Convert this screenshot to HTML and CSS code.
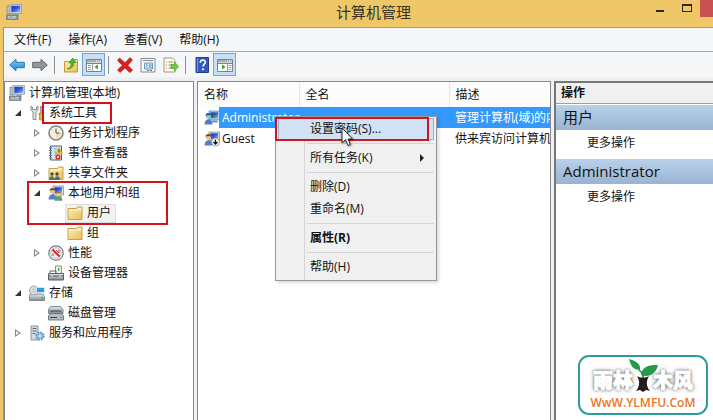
FILE: index.html
```html
<!DOCTYPE html>
<html lang="zh-CN">
<head>
<meta charset="utf-8">
<title>计算机管理</title>
<meta name="viewport" content="width=device-width,initial-scale=1">
<link rel="stylesheet" href="styles.css">
</head>
<body>

<!-- shared icons -->
<svg class="sprite" aria-hidden="true">
  <defs>
    <linearGradient id="screen" x1="0" y1="0" x2="1" y2="1"><stop offset="0" stop-color="#1c2fb8"/><stop offset=".5" stop-color="#3558e0"/><stop offset="1" stop-color="#a9c8fb"/></linearGradient>
    <linearGradient id="yellow" x1="0" y1="0" x2="1" y2="1"><stop offset="0" stop-color="#fff0b8"/><stop offset="1" stop-color="#e9bd55"/></linearGradient>
    <linearGradient id="sky" x1="0" y1="0" x2="0" y2="1"><stop offset="0" stop-color="#7fd0f8"/><stop offset="1" stop-color="#1b86cf"/></linearGradient>
    <linearGradient id="metal" x1="0" y1="0" x2="0" y2="1"><stop offset="0" stop-color="#e8ecee"/><stop offset="1" stop-color="#7d8990"/></linearGradient>
  </defs>
  <symbol id="i-computer" viewBox="0 0 16 16">
    <path d="M1 2h4v8H1z" fill="#b9c2c8" stroke="#6f7a82" stroke-width=".6"/>
    <path d="M4 .5h11.5v9H4z" fill="#d5dbe0" stroke="#7c8790" stroke-width=".6"/>
    <path d="M5.300 1.800h9v6.400h-9z" fill="url(#screen)"/>
    <path d="M8 9.500h4l1 2H7z" fill="#a5adb3"/>
    <path d="M.5 11h11.500v4.500H.5z" fill="#8b979f" stroke="#58646c" stroke-width=".6"/>
    <path d="M2 12.500h2.500m1.500 0h4M2 14h8" stroke="#c4cdd2"/>
  </symbol>
  <symbol id="i-folder" viewBox="0 0 16 16">
    <path d="M1 3.500 9.500 3.500 10.500 2h4.500v12.500H1z" fill="url(#yellow)" stroke="#c9a048"/>
    <path d="M11 3.500h3M2 5h12.500" stroke="#fff8dc"/>
  </symbol>
  <symbol id="i-pane" viewBox="0 0 16 14">
    <path d="M.5 1.500h15v12H.5z" fill="#fff" stroke="#7b8187"/>
    <path d="M1 2h14v2.500H1z" fill="#a8adb2"/>
    <path d="M10 3h1m1 0h1m1 0h1" stroke="#fff"/>
    <path d="M1 5.500h14" stroke="#7b8187"/>
    <path d="M6.500 6v7" stroke="#9b9fa3"/>
    <path d="M2 7.500h3M2 9.500h3M2 11.500h3" stroke="#9b9fa3"/>
  </symbol>
  <symbol id="i-user" viewBox="0 0 16 16">
    <path d="M5 1h10.500v9H5z" fill="#d5dbe0" stroke="#7c8790" stroke-width=".7"/>
    <path d="M6.500 2.300h7.500v6h-7.500z" fill="url(#screen)"/>
    <path d="M8 10.500h5l1 2H8z" fill="#8e989f"/>
    <circle cx="4.500" cy="6" r="2.700" fill="#eabf8d"/>
    <path d="M1.600 6C1 2 8 2 7.400 6 6 4.500 3.500 4.500 1.600 6z" fill="#6d4c28"/>
    <path d="M.5 14.500c0-7 8-7 8 0z" fill="#4f82c4"/>
  </symbol>
</svg>

<header class="titlebar">
  <svg class="icon"><use href="#i-computer"/></svg>
  <h1>计算机管理</h1>
  <div class="winctl">
    <button class="min" aria-label="最小化"></button>
    <button class="max" aria-label="最大化"></button>
    <button class="close" aria-label="关闭"></button>
  </div>
</header>

<div class="window">
  <nav class="menubar">
    <button>文件(F)</button>
    <button>操作(A)</button>
    <button>查看(V)</button>
    <button>帮助(H)</button>
  </nav>

  <div class="toolbar">
    <button aria-label="后退"><svg class="icon" viewBox="0 0 16 16"><path d="M.7 8 7 2.300v3h8.300v5.400H7v3z" fill="url(#sky)" stroke="#2577b5"/></svg></button>
    <button aria-label="前进"><svg class="icon" viewBox="0 0 16 16"><path d="M15.300 8 9 2.300v3H.7v5.400H9v3z" fill="#929699" stroke="#66696c"/></svg></button>
    <i class="sep"></i>
    <button aria-label="向上"><svg class="icon" viewBox="0 0 16 16"><path d="M1.500 4.500h7l1-2h5v12.500h-13z" fill="url(#yellow)" stroke="#c39a3d"/><path d="M4 12c3.500-1 4.500-3.500 4.200-6H6L9.500 1 13 5.500h-2.200C11 9 9 12 4 12z" fill="#48b82c" stroke="#2a8a18" stroke-width=".6"/></svg></button>
    <button class="on" aria-label="显示控制台树"><svg class="icon" viewBox="0 0 16 14"><use href="#i-pane"/><path d="M12 6.500v5L8.500 9z" fill="#35a82c"/></svg></button>
    <i class="sep"></i>
    <button aria-label="删除"><svg class="icon" viewBox="0 0 16 16"><path d="M2.500 1 8 5.800 13 .5l2.500 2.500-4.700 5.300L15.500 13 13 15.700l-5-4.700-5 4.500L.5 13l4.800-4.700L.5 3.500z" fill="#dc2020" stroke="#a91414" stroke-width=".6"/></svg></button>
    <button aria-label="属性"><svg class="icon" viewBox="0 0 16 16"><path d="M1 1.500h14v13.500H1z" fill="#f5f7f9" stroke="#858c92"/><path d="M3 3.500h10" stroke="#858c92"/><path d="M4.500 6h8v6h-8z" fill="#dceaf5" stroke="#6998bb"/><path d="M6 8h1.500M9 8h2.500M6 10h1.500M9 10h2.500" stroke="#3b81b4"/><path d="M7 13.500h2m1 0h2" stroke="#777"/></svg></button>
    <button aria-label="导出列表"><svg class="icon" viewBox="0 0 16 16"><path d="M1 1h8.500L12 3.500V15H1z" fill="#fffbe6" stroke="#a2967a"/><path d="M3 5h1m1.500 0h5M3 8h1m1.500 0h4M3 11h1m1.500 0h4" stroke="#8c8c83"/><path d="M8 7.500h3.500V5l4 4.500-4 4.500v-2.500H8z" fill="#69cc3b" stroke="#3d9a21" stroke-width=".6"/></svg></button>
    <i class="sep"></i>
    <button aria-label="帮助"><svg class="icon" viewBox="0 0 16 16"><path d="M2 .5h12.500v15H2z" fill="#3458bb" stroke="#203b8b"/><path d="M3.500 1v14" stroke="#7897e4"/><path d="M6.300 5.800c0-3.800 5-3.500 5-.6 0 2-2.300 2-2.300 4.300" fill="none" stroke="#fff" stroke-width="1.600"/><circle cx="9" cy="12.300" r="1.100" fill="#fff"/></svg></button>
    <button class="on" aria-label="显示操作窗格"><svg class="icon" viewBox="0 0 16 14"><use href="#i-pane"/><path d="M1 6h9v7H1z" fill="#fff"/><path d="M10.500 6v7" stroke="#9b9fa3"/><path d="M11.500 7.500h3m-3 2h3m-3 2h3" stroke="#9b9fa3"/><path d="M5 6.500v5L8.500 9z" fill="#35a82c"/></svg></button>
  </div>

  <main class="panes">
    <!-- console tree -->
    <section class="pane tree">
      <div class="node root"><svg class="icon"><use href="#i-computer"/></svg><span>计算机管理(本地)</span></div>
      <ul>
        <li>
          <div class="node"><i class="tw open"></i><svg class="icon" viewBox="0 0 16 16"><path d="M2 1v4l2 2v7.500h3V7l2-2V1L7.500 2v2.500h-4V2z" fill="#dce0e2" stroke="#777e83" stroke-width=".8"/><path d="M12 1v7" stroke="#7e868b" stroke-width="1.500"/><path d="M10 8h4v2h-.5v5h-3v-5H10z" fill="#f1b51e" stroke="#b87e08" stroke-width=".7"/></svg><span class="mark">系统工具</span></div>
          <ul>
            <li><div class="node"><i class="tw"></i><svg class="icon" viewBox="0 0 16 16"><circle cx="8" cy="8" r="7" fill="#f4efdb" stroke="#83898f" stroke-width="1.600"/><path d="M8 8h5A5 5 0 0 1 8 13z" fill="#f2dca0"/><path d="M8 3.500V8h3.500" fill="none" stroke="#4d545a"/></svg><span>任务计划程序</span></div></li>
            <li><div class="node"><i class="tw"></i><svg class="icon" viewBox="0 0 16 16"><path d="M2.500 1h11v14h-11z" fill="#dce7f3" stroke="#46638d"/><path d="M1 3h3M1 5.500h3M1 8h3M1 10.500h3M1 13h3" stroke="#5c6f88"/><path d="M6 4h3M6 7h2M6 10h2" stroke="#7596bc"/><path d="M11 2.500 14.500 9h-7z" fill="#ffd42c" stroke="#bd8e00" stroke-width=".6"/><path d="M11 4.500v3" stroke="#222"/><circle cx="10" cy="12" r="2.600" fill="#d8292d"/><path d="m9 11 2 2m0-2-2 2" stroke="#fff" stroke-width=".8"/></svg><span>事件查看器</span></div></li>
            <li><div class="node"><i class="tw"></i><svg class="icon" viewBox="0 0 16 16"><use href="#i-folder"/><circle cx="4" cy="9" r="1.700" fill="#55452a"/><circle cx="9" cy="9" r="1.700" fill="#55452a"/><path d="M1 15c0-5 5.500-5 5.500 0z" fill="#3a7d6b"/><path d="M6.500 15c0-5 5.500-5 5.500 0z" fill="#386ca8"/></svg><span>共享文件夹</span></div></li>
            <li class="boxed">
              <div class="node"><i class="tw open"></i><svg class="icon" viewBox="0 0 16 16"><use href="#i-user"/><circle cx="10.500" cy="9" r="2.500" fill="#edc99c"/><path d="M8 9c-.5-3.500 5.500-3.500 5 0-1.500-1.500-3.500-1.500-5 0z" fill="#9b713d"/><path d="M6.500 15.800c0-6 8-6 8 0z" fill="#59a36c"/></svg><span>本地用户和组</span></div>
              <ul>
                <li><div class="node"><i class="tw none"></i><div class="picked"><svg class="icon"><use href="#i-folder"/></svg><span>用户</span></div></div></li>
                <li><div class="node"><i class="tw none"></i><svg class="icon"><use href="#i-folder"/></svg><span>组</span></div></li>
              </ul>
            </li>
            <li><div class="node"><i class="tw"></i><svg class="icon" viewBox="0 0 16 16"><circle cx="8" cy="8" r="7.200" fill="#f8f8f8" stroke="#777d82" stroke-width="1.200"/><circle cx="8" cy="8" r="5.200" fill="#fff" stroke="#a3a8ac" stroke-width=".8"/><path d="m4.500 4.500 7 7" stroke="#d52020" stroke-width="2"/><path d="M5 11V8m3-3 3 3V4.500" fill="none" stroke="#bc3434"/></svg><span>性能</span></div></li>
            <li><div class="node"><i class="tw none"></i><svg class="icon" viewBox="0 0 16 16"><path d="M7.500 1h6v8h-6z" fill="#eff4ed" stroke="#88938a"/><path d="M10 3h1.500v3H10z" fill="#5ba553"/><path d="M2 8V6h6v2" fill="none" stroke="#5b6870"/><path d="M.5 8.500h15V15H.5z" fill="url(#metal)" stroke="#56636b"/><path d="M1 11h14" stroke="#4f5c65"/><path d="M4 10v2.500m8-2.500v2.500" stroke="#e3e8eb"/></svg><span>设备管理器</span></div></li>
          </ul>
        </li>
        <li>
          <div class="node"><i class="tw open"></i><svg class="icon" viewBox="0 0 16 16"><path d="M1 9h13l1.500 2.500v4H.5v-4z" fill="url(#metal)" stroke="#707a81" stroke-width=".8"/><circle cx="5" cy="5.500" r="4.500" fill="#d9dee2" stroke="#89939a" stroke-width=".8"/><circle cx="5" cy="5.500" r="1.300" fill="#fff" stroke="#89939a" stroke-width=".6"/><path d="M7.500 2.500h8v5h-8z" fill="#2e9bd9" stroke="#e1edf4" stroke-width=".8"/><path d="M12 13h2" stroke="#37b634" stroke-width="1.500"/></svg><span>存储</span></div>
          <ul>
            <li><div class="node"><i class="tw none"></i><svg class="icon" viewBox="0 0 16 16"><path d="M2.500 1.500h10l2.500 3v4H.5v-4z" fill="url(#metal)" stroke="#697379" stroke-width=".8"/><path d="M3 8.500h10l2.500 2V15H.5v-4.500z" fill="#b5bdc2" stroke="#5e686f" stroke-width=".8"/><path d="M2 6h11M2 12.500h7" stroke="#384047"/><path d="M12 12.500h2" stroke="#38c037"/></svg><span>磁盘管理</span></div></li>
          </ul>
        </li>
        <li><div class="node"><i class="tw"></i><svg class="icon" viewBox="0 0 16 16"><path d="M2 1h7v14H2z" fill="#d3dbe1" stroke="#758089" stroke-width=".8"/><path d="M3.500 3.500h4m-4 2.500h4m-4 2.500h3" stroke="#5e6e7b"/><circle cx="11" cy="11" r="3.600" fill="#b8d4ed" stroke="#5e93c4" stroke-width="2" stroke-dasharray="1.800 1"/><circle cx="11" cy="11" r="2.600" fill="#8db9df"/><circle cx="11" cy="11" r="1" fill="#fff"/></svg><span>服务和应用程序</span></div></li>
      </ul>
    </section>

    <!-- user list -->
    <section class="pane list">
      <table>
        <colgroup><col class="c-name"><col class="c-full"><col></colgroup>
        <thead><tr><th>名称</th><th>全名</th><th>描述</th></tr></thead>
        <tbody>
          <tr class="sel"><td><div class="name"><svg class="icon"><use href="#i-user"/></svg><span>Administrator</span></div></td><td></td><td>管理计算机(域)的内</td></tr>
          <tr><td><div class="name"><svg class="icon" viewBox="0 0 16 16"><use href="#i-user"/><circle cx="11.500" cy="11" r="4" fill="#fff" stroke="#777" stroke-width=".7"/><path d="M11.500 8.500v4.500m-2-2 2 2 2-2" fill="none" stroke="#111" stroke-width="1.300"/></svg><span>Guest</span></div></td><td></td><td>供来宾访问计算机</td></tr>
        </tbody>
      </table>

      <div class="ctxmenu">
        <button class="hot">设置密码(S)...</button>
        <hr>
        <button class="sub">所有任务(K)</button>
        <hr>
        <button>删除(D)</button>
        <button>重命名(M)</button>
        <hr>
        <button class="def">属性(R)</button>
        <hr>
        <button>帮助(H)</button>
        <svg class="cursor" viewBox="0 0 12 20"><path d="M1 1v15l3.500-3.300L7 18.500l2.300-1L7 12h4.500z" fill="#fff" stroke="#222"/></svg>
      </div>
    </section>

    <!-- actions -->
    <aside class="pane actions">
      <h2>操作</h2>
      <h3>用户</h3>
      <button>更多操作</button>
      <h3>Administrator</h3>
      <button>更多操作</button>
    </aside>
  </main>
</div>

<div class="logo">
  <div class="brand">
    <span>雨林</span>
    <svg viewBox="0 0 30 36"><path d="M9 18c3 2 9 2 12 0-3 5-3 10 1 15l-4-1-3 2-3-2-4 1c4-5 4-10 1-15z" fill="#241d1a"/><path d="M15 20c0-4-1-6-4-8M15 20c0-4 1-5 4-7" fill="none" stroke="#168944" stroke-width="1.500"/><path d="M12 12C5 12 3 8 1 1c7 2 12 5 11 11z" fill="#239b4a"/><path d="M13 17c1-9 8-10 17-10-2 9-9 13-17 10z" fill="#239b4a"/></svg>
    <span>木风</span>
  </div>
  <div class="url">WwW.YLMFU.CoM</div>
</div>

</body>
</html>
```
FILE: styles.css
```css
:root { --gold:#efc768; --line:#828790; --red:#d3131b }
*,*::before,*::after { box-sizing:border-box }
body   { margin:0; height:100vh; overflow:hidden; display:flex; flex-direction:column; background:var(--gold); color:#111; font:12px/20px "Open Sans","Noto Sans CJK SC",sans-serif }
button { border:0; padding:0; margin:0; background:none; font:inherit; color:inherit; text-align:left }
ul     { list-style:none; margin:0; padding:0 }
.sprite { position:absolute; width:0; height:0 }
.icon  { width:16px; height:16px; flex:none; display:block }

/* title bar */
.titlebar { height:27px; flex:none; display:flex; align-items:flex-start; justify-content:space-between; padding-left:6px }
.titlebar .icon { margin-top:4px; margin-right:80px }
.titlebar h1 { margin:0; font-size:15px; line-height:25px; font-weight:400; color:#3a321f }
.winctl { display:flex; width:68px }
.winctl button { height:17px }
.min   { width:28px; position:relative }
.min::after { content:""; position:absolute; left:11px; top:10px; width:8px; height:2px; background:#2c2618 }
.max   { width:27px; position:relative }
.max::after { content:""; position:absolute; left:9px; top:4px; width:10px; height:8px; border:1px solid #2c2618; border-top-width:2px }
.winctl .close { flex:1; background:#c75050 }

.window { flex:1; min-height:0; margin-left:3px; display:flex; flex-direction:column; background:#f0f0f0; border-left:1px solid #b08f48; border-top:1px solid #b99a55 }
.menubar { display:flex; gap:17px; height:24px; flex:none; padding-left:10px; background:#f5f6f7; border-bottom:1px solid #a5a8ab; line-height:23px }

/* toolbar */
.toolbar { display:flex; align-items:center; height:25px; flex:none; padding-left:1px; background:#f5f6f7 }
.toolbar button { width:23px; height:23px; display:flex; align-items:center; justify-content:center }
.toolbar .on { background:#c5dff7; border:1px solid #6ea7dc }
.toolbar .sep { width:1px; height:18px; margin:0 4px 0 3px; background:#8c8f92 }

.panes { flex:1; min-height:0; display:grid; grid-template-columns:190px minmax(0,1fr) 159px; gap:3px; padding-top:4px }
.pane  { background:#fff; border:1px solid var(--line); border-bottom:0; min-width:0 }

/* tree */
.tree  { padding-top:1px }
.tree > ul { padding-left:10px }
.tree ul ul { padding-left:19px }
.node  { display:flex; align-items:center; height:20px; white-space:nowrap }
.node span { margin-left:4px }
.root  { padding-left:4px }
.tw    { width:14px; flex:none; display:flex }
.tw::before { content:""; width:6px; height:8px; background:#888; clip-path:polygon(0 0,100% 50%,0 100%,0 0,1px 2px,1px 6px,4px 4px,1px 2px) }
.tw.open::before { height:6px; background:#333; clip-path:polygon(100% 0,100% 100%,0 100%) }
.tw.none::before { display:none }
.node .mark { margin:0 0 0 -3px; padding:0 13px 0 5px; border:2px solid var(--red); line-height:18px }
.boxed { position:relative }
.boxed::after { content:""; position:absolute; left:-7px; top:-2px; width:141px; height:44px; border:2px solid var(--red) }
.picked { display:flex; align-items:center; height:19px; margin-left:-2px; padding:0 4px 0 1px; background:#f2f2f2; border:1px solid #ddd }

/* list */
.list  { position:relative }
table  { width:100%; table-layout:fixed; border-collapse:collapse }
.c-name { width:101px }
.c-full { width:150px }
th,td  { padding:0 0 0 6px; height:21px; text-align:left; font-weight:400; white-space:nowrap; overflow:hidden }
th     { height:25px; background:#fcfcfc; border-right:1px solid #e3e8ee }
th:last-child { border-right:0 }
td     { line-height:21px }
.name  { display:flex; align-items:center }
.name span { padding-left:2px; flex:1 }
.sel td { background:#3399ff; color:#fff }
.sel td:first-child { background:linear-gradient(90deg,#fff 21px,#3399ff 21px) }
.sel td:first-child,.sel .name { overflow:visible }
.sel .icon { filter:sepia(1) hue-rotate(175deg) saturate(3) brightness(.8) }

/* context menu */
.ctxmenu { position:absolute; left:77px; top:34px; width:162px; padding:1px 2px 2px; background:linear-gradient(90deg,#f0f0f0 28px,#d5d5d5 28px,#d5d5d5 29px,#f0f0f0 29px); border:1px solid #979797; box-shadow:2px 2px 3px rgba(0,0,0,.15) }
.ctxmenu button { display:block; width:100%; height:22px; padding-left:32px; line-height:22px; position:relative }
.ctxmenu hr { margin:3px 0 3px 29px; border:0; height:1px; background:#d5d5d5 }
.ctxmenu .hot { background:#d0e2f3; border:1px solid #88b5df; padding-left:31px; line-height:20px }
.hot::after { content:""; position:absolute; left:-4px; top:-2px; width:154px; height:24px; border:2px solid var(--red) }
.sub::after { content:""; position:absolute; right:10px; top:7px; border:4px solid transparent; border-left-color:#222; border-right:0 }
.ctxmenu .def { font-weight:700 }
.cursor { position:absolute; left:65px; top:10px; width:12px; height:20px; filter:drop-shadow(1px 1px 1px rgba(0,0,0,.4)) }

/* actions */
.actions { border-width:2px 0 0 2px; border-color:#777; overflow:hidden }
.actions h2 { margin:0 0 1px; padding-left:5px; font-size:12px; line-height:20px; background:#f0f0f0; border-bottom:1px solid #a0a0a0 }
.actions h3 { margin:0; padding-left:7px; height:25px; font-size:15px; line-height:24px; font-weight:400; background:linear-gradient(#b9d1ea,#99b4d1) }
.actions button { display:block; width:100%; height:29px; padding:0 0 4px 31px }

/* site badge */
.logo  { position:absolute; right:5px; bottom:5px; width:130px; height:60px; background:#fff; border:2px solid #2f9c9c; border-radius:11px; text-align:center }
.brand { display:flex; justify-content:center; height:37px; font-size:20px; line-height:48px; font-weight:900; color:#fff; -webkit-text-stroke:1px #fff; text-shadow:0 0 2px #555,0 0 3px #666,0 0 5px #888 }
.brand svg { width:30px; height:36px; margin:1px -5px 0 }
.url   { font-size:12px; line-height:18px; font-weight:600; color:#ec7425 }
```
